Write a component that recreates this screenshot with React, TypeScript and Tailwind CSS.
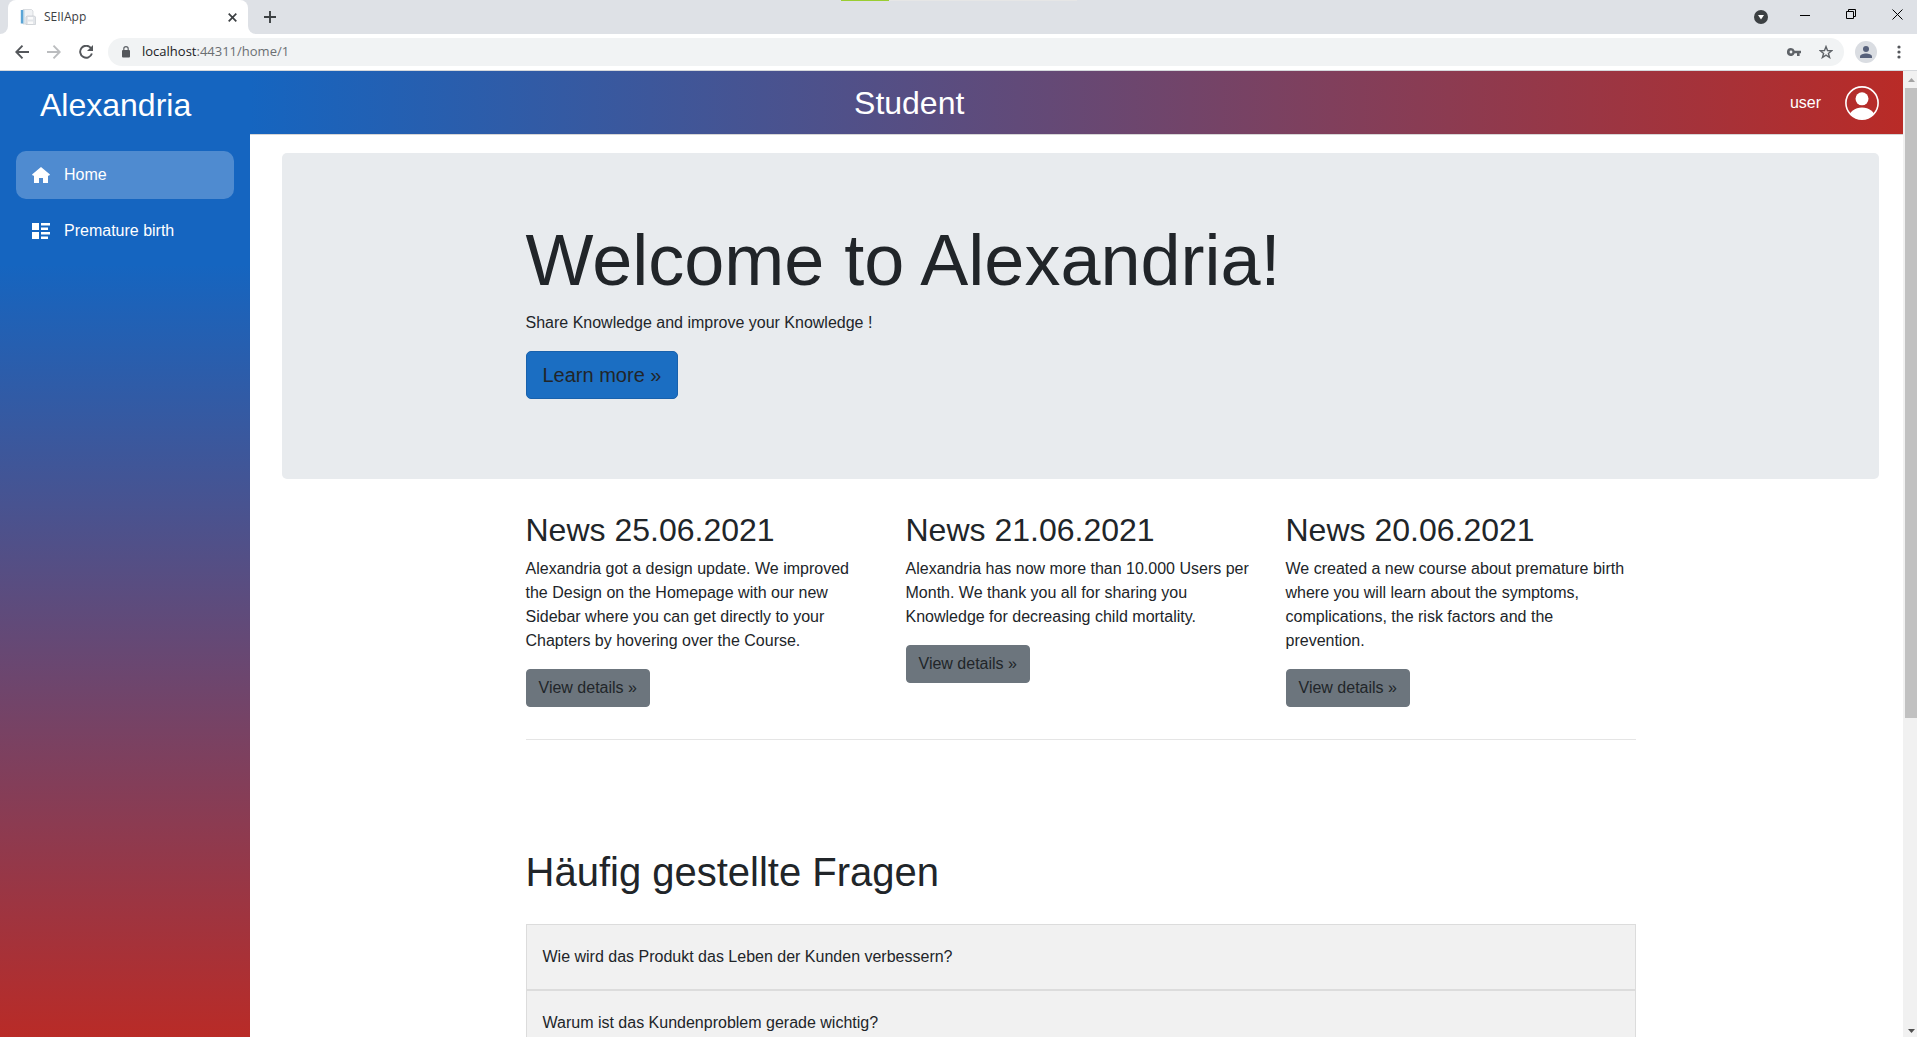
import React from "react";

const navItems = [
  { label: "Home", active: true, icon: "home" },
  { label: "Premature birth", active: false, icon: "course" },
];

const news = [
  {
    title: "News 25.06.2021",
    text: "Alexandria got a design update. We improved the Design on the Homepage with our new Sidebar where you can get directly to your Chapters by hovering over the Course.",
  },
  {
    title: "News 21.06.2021",
    text: "Alexandria has now more than 10.000 Users per Month. We thank you all for sharing you Knowledge for decreasing child mortality.",
  },
  {
    title: "News 20.06.2021",
    text: "We created a new course about premature birth where you will learn about the symptoms, complications, the risk factors and the prevention.",
  },
];

const questions = [
  "Wie wird das Produkt das Leben der Kunden verbessern?",
  "Warum ist das Kundenproblem gerade wichtig?",
];

function NavIcon({ name }: { name: string }) {
  if (name === "home") {
    return (
      <svg width="18" height="16" viewBox="0 0 18 16" fill="#fff" aria-hidden="true">
        <path d="M9 0 18 7.6 16.8 9 16 8.3V16H11V11H7V16H2V8.3L1.2 9 0 7.6Z" />
      </svg>
    );
  }
  return (
    <svg width="19" height="16" viewBox="0 0 19 16" fill="#fff" aria-hidden="true">
      <path d="M0 0h7v7H0zM0 9h7v7H0zM9 0h9v2.5H9zM9 4.5h7V7H9zM9 9h9v2.5H9zM9 13.5h7V16H9z" />
    </svg>
  );
}

function TabStrip() {
  return (
    <div className="relative flex h-[34px] shrink-0 items-stretch bg-[#dee1e6] text-[#3c4043]">
      <div className="absolute inset-x-0 top-0 mx-auto flex h-px w-[236px]">
        <span className="w-12 bg-[#9acd32]" />
        <span className="flex-1 bg-[#e6e6e6]" />
      </div>
      <div className="flex w-2 items-end bg-white">
        <span className="h-full w-2 rounded-br-lg bg-[#dee1e6]" />
      </div>
      <div className="flex w-60 items-center rounded-t-lg bg-white pl-3 pr-2">
        <svg width="16" height="16" viewBox="0 0 16 16" aria-hidden="true">
          <path d="M3 .5h8.500l1.500 1.500V15H3z" fill="#f1f3f5" stroke="#ccd0d4" strokeWidth=".7" />
          <path d="M.8 1h2.700v13.500H.8z" fill="#5aa5d6" />
          <path d="M3.500 1h1.200v13.500H3.500z" fill="#c5dcea" />
          <path d="M7 7h7.500l1 1v7.500H6V8z" fill="#e3e6ea" stroke="#c0c4ca" strokeWidth=".6" />
          <path d="M8 8h5v2.500H8zM8 12.500h5V15H8z" fill="#fafafa" />
        </svg>
        <span className="ml-2 flex-1 text-xs">SEIIApp</span>
        <button aria-label="Close tab" className="flex size-4 items-center justify-center">
          <svg width="9" height="9" viewBox="0 0 9 9" stroke="#3c4043" strokeWidth="1.7">
            <path d="m.7.7 7.600 7.600m0-7.600L.7 8.300" />
          </svg>
        </button>
      </div>
      <div className="flex w-2 bg-white">
        <span className="h-full w-2 rounded-bl-lg bg-[#dee1e6]" />
      </div>
      <button aria-label="New tab" className="ml-2 flex w-3 items-center justify-center">
        <svg width="12" height="12" viewBox="0 0 12 12" stroke="#3c4043" strokeWidth="1.9">
          <path d="M6 0v12M0 6h12" />
        </svg>
      </button>
      <div className="ml-auto flex items-center pr-3.5">
        <button aria-label="Search tabs" className="mr-8">
          <svg width="14" height="14" viewBox="0 0 14 14">
            <circle cx="7" cy="7" r="7" fill="#3c4043" />
            <path d="M4 5h6L7 9.500z" fill="#fff" />
          </svg>
        </button>
        <button aria-label="Minimize" className="mb-1.5 mr-9">
          <svg width="10" height="11" viewBox="0 0 10 11" stroke="#000">
            <path d="M0 6.500h10" />
          </svg>
        </button>
        <button aria-label="Restore" className="mb-1.5 mr-9">
          <svg width="10" height="10" viewBox="0 0 10 10" fill="none" stroke="#000">
            <path d="M.5 2.500h7v7h-7zM2.500 2.500v-2h7v7h-2" />
          </svg>
        </button>
        <button aria-label="Close window" className="mb-1.5">
          <svg width="11" height="11" viewBox="0 0 11 11" stroke="#000">
            <path d="m.5.5 10 10m0-10-10 10" />
          </svg>
        </button>
      </div>
    </div>
  );
}

function Toolbar() {
  return (
    <div className="flex h-[37px] shrink-0 items-center border-b border-[#d5d8dc] bg-white pl-[15px] pr-4">
      <div className="flex w-[93px] items-center gap-[18px]">
        <button aria-label="Back">
          <svg width="14" height="14" viewBox="0 0 14 14" fill="none" stroke="#54575b" strokeWidth="1.9">
            <path d="M14 7H1.500M7.500.7 1.300 7l6.200 6.300" />
          </svg>
        </button>
        <button aria-label="Forward">
          <svg width="14" height="14" viewBox="0 0 14 14" fill="none" stroke="#bbbdbf" strokeWidth="1.9">
            <path d="M0 7h12.500M6.500.7 12.700 7l-6.200 6.300" />
          </svg>
        </button>
        <button aria-label="Reload">
          <svg width="14" height="14" viewBox="0 0 14 14">
            <path d="M11.900 3A6 6 0 1 0 12.900 8.500" fill="none" stroke="#54575b" strokeWidth="1.9" />
            <path d="M14 0v6H8z" fill="#54575b" />
          </svg>
        </button>
      </div>
      <div className="flex h-7 flex-1 items-center rounded-full bg-[#f1f3f4] pl-3.5 pr-[11px]">
        <svg width="8" height="12" viewBox="0 0 8 12" aria-hidden="true">
          <path d="M1.800 5V2.800a2.200 2.200 0 0 1 4.400 0V5" fill="none" stroke="#5f6368" strokeWidth="1.2" />
          <rect y="4" width="8" height="7.5" rx="1" fill="#54575b" />
        </svg>
        <span className="ml-3 flex-1 text-[13px] text-[#6b6f73]">
          <span className="text-[#202124]">localhost</span>:44311/home/1
        </span>
        <button aria-label="Passwords" className="mr-[18px]">
          <svg width="14" height="8" viewBox="0 0 14 8">
            <path
              d="M4 0a4 4 0 1 0 3.700 5.300H10V8h2.600V5.300H14V2.700H7.700A4 4 0 0 0 4 0Zm0 2.600a1.400 1.400 0 1 1 0 2.800 1.400 1.400 0 0 1 0-2.800Z"
              fill="#5f6368"
              fillRule="evenodd"
            />
          </svg>
        </button>
        <button aria-label="Bookmark">
          <svg width="14" height="14" viewBox="0 0 14 14" fill="none" stroke="#5f6368" strokeWidth="1.4">
            <path d="m7 1.600 1.500 3.900 4.200.2-3.300 2.700 1.200 4.100L7 10.200l-3.600 2.300 1.200-4.100L1.300 5.700l4.200-.2z" />
          </svg>
        </button>
      </div>
      <button aria-label="Profile" className="ml-[11px] mr-5">
        <svg width="22" height="22" viewBox="0 0 22 22">
          <circle cx="11" cy="11" r="11" fill="#dadde2" />
          <circle cx="11" cy="8" r="3" fill="#56607a" />
          <path d="M5 17v-1.500c0-2 3.500-3 6-3s6 1 6 3V17z" fill="#56607a" />
        </svg>
      </button>
      <button aria-label="Menu">
        <svg width="4" height="14" viewBox="0 0 4 14" fill="#54575b">
          <circle cx="2" cy="2" r="1.6" />
          <circle cx="2" cy="7" r="1.6" />
          <circle cx="2" cy="12" r="1.6" />
        </svg>
      </button>
    </div>
  );
}

function Sidebar() {
  return (
    <aside className="w-[250px] shrink-0 bg-linear-to-b/srgb from-[#1565c0] from-20% to-[#b92b27] text-white">
      <a href="#home" className="block pl-10 pt-2.5 text-[32px] leading-12">
        Alexandria
      </a>
      <nav className="mt-[22px] flex flex-col gap-2 px-4">
        {navItems.map((item) => (
          <a
            key={item.label}
            href="#course"
            className={
              item.active
                ? "flex h-12 items-center rounded-[10px] bg-white/25 pl-4"
                : "flex h-12 items-center rounded-[10px] pl-4"
            }
          >
            <span className="flex w-8 items-center">
              <NavIcon name={item.icon} />
            </span>
            <span className="leading-6">{item.label}</span>
          </a>
        ))}
      </nav>
    </aside>
  );
}

function PageHeader() {
  return (
    <header className="flex h-16 shrink-0 items-center border-b border-[#d6d5d5] bg-linear-to-r/srgb from-[#1565c0] to-[#b92b27] text-white">
      <h1 className="w-4/5 pr-1 text-center text-[32px] leading-12">Student</h1>
      <div className="flex flex-1 items-center justify-end gap-6 pr-6">
        <span>user</span>
        <button aria-label="Account">
          <svg width="34" height="34" viewBox="0 0 34 34">
            <clipPath id="avatar">
              <circle cx="17" cy="17" r="16" />
            </clipPath>
            <circle cx="17" cy="12.8" r="6.5" fill="#fff" />
            <ellipse cx="17" cy="32" rx="13" ry="10.5" fill="#fff" clipPath="url(#avatar)" />
            <circle cx="17" cy="17" r="16.1" fill="none" stroke="#fff" strokeWidth="1.6" />
          </svg>
        </button>
      </div>
    </header>
  );
}

function Scrollbar() {
  return (
    <div className="flex w-3.5 shrink-0 flex-col items-end bg-[#f1f1f1]" aria-hidden="true">
      <div className="flex w-3 flex-1 flex-col">
        <div className="flex h-[17px] items-center justify-center">
          <svg width="7" height="4" viewBox="0 0 7 4" fill="#a3a3a3">
            <path d="M3.500 0 7 4H0z" />
          </svg>
        </div>
        <div className="flex-1">
          <div className="h-[67%] bg-[#c1c1c1]" />
        </div>
        <div className="flex h-2 items-start justify-center">
          <svg width="7" height="4" viewBox="0 0 7 4" fill="#505050">
            <path d="M3.500 4 0 0h7z" />
          </svg>
        </div>
      </div>
    </div>
  );
}

function MainContent() {
  return (
    <main className="min-h-0 flex-1 overflow-hidden pl-8 pr-6 pt-[18px]">
      <section className="mb-8 rounded-[5px] bg-[#e8ebee] px-8 pb-20 pt-16">
        <div className="mx-auto max-w-[1140px] px-[15px]">
          <h2 className="mb-2 text-7xl leading-[86px]">Welcome to Alexandria!</h2>
          <p className="mb-4 leading-6">Share Knowledge and improve your Knowledge !</p>
          <a
            href="#more"
            className="inline-block rounded-[5px] border border-[#1861ac] bg-[#1b6ec2] px-4 py-2 align-top text-xl leading-[30px]"
          >
            Learn more »
          </a>
        </div>
      </section>
      <div className="mx-auto max-w-[1140px] px-[15px]">
        <div className="grid grid-cols-3 gap-[30px] pb-4">
          {news.map((item) => (
            <article key={item.title}>
              <h2 className="mb-2 text-[32px] leading-[38px]">{item.title}</h2>
              <p className="mb-4 leading-6">{item.text}</p>
              <a
                href="#details"
                className="inline-block rounded border border-[#6c757d] bg-[#6c757d] px-3 py-1.5 align-top leading-6"
              >
                View details »
              </a>
            </article>
          ))}
        </div>
        <hr className="mt-4 border-t border-[#e5e5e5]" />
        <h2 className="mt-[108px] text-[40px] leading-12">Häufig gestellte Fragen</h2>
        <div className="mt-7">
          {questions.map((question) => (
            <button
              key={question}
              className="block w-full border border-[#dcdcdc] bg-[#f1f1f1] px-4 py-5 text-left leading-6"
            >
              {question}
            </button>
          ))}
        </div>
      </div>
    </main>
  );
}

export default function App() {
  return (
    <div className="flex h-screen flex-col overflow-hidden bg-white">
      <div className="shrink-0 font-['Open_Sans',sans-serif]">
        <TabStrip />
        <Toolbar />
      </div>
      <div className="flex min-h-0 flex-1 font-['Liberation_Sans',sans-serif] text-base text-[#212529]">
        <Sidebar />
        <div className="flex min-w-0 flex-1 flex-col">
          <PageHeader />
          <MainContent />
        </div>
        <Scrollbar />
      </div>
    </div>
  );
}
